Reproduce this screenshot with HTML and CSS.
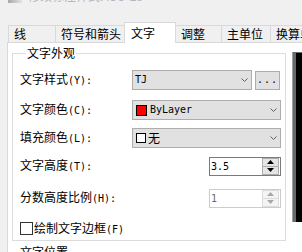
FILE: index.html
```html
<html>
<head>
  <title>修改标注样式</title>
  <link rel="stylesheet" href="styles.css">
</head>
<body>
  <div class="dialog">
    <div class="titlebar">
      <span class="appicon"></span>
      <span class="title">修改标注样式: ISO-25</span>
    </div>

    <div class="tabs">
      <div class="tab w1">线</div>
      <div class="tab w2">符号和箭头</div>
      <div class="tab w3 active">文字</div>
      <div class="tab w4">调整</div>
      <div class="tab w5">主单位</div>
      <div class="tab w6">换算单位</div>
    </div>

    <div class="panel">
      <div class="left">
        <fieldset class="group">
          <legend>文字外观</legend>

          <div class="row r1">
            <span class="lbl">文字样式<span class="hk">(Y):</span></span>
            <div class="combo short">
              <span class="mono">TJ</span>
              <svg class="chev" width="7" height="4" viewBox="0 0 7 4"><polyline points="0.5,0.5 3.5,3.5 6.5,0.5" fill="none" stroke="#606060" stroke-width="1"/></svg>
            </div>
            <div class="btn dots">...</div>
          </div>

          <div class="row r2">
            <span class="lbl">文字颜色<span class="hk">(C):</span></span>
            <div class="combo">
              <span class="swatch red"></span>
              <span class="mono">ByLayer</span>
              <svg class="chev" width="7" height="4" viewBox="0 0 7 4"><polyline points="0.5,0.5 3.5,3.5 6.5,0.5" fill="none" stroke="#606060" stroke-width="1"/></svg>
            </div>
          </div>

          <div class="row r3">
            <span class="lbl">填充颜色<span class="hk">(L):</span></span>
            <div class="combo">
              <span class="swatch none"></span>
              <span>无</span>
              <svg class="chev" width="7" height="4" viewBox="0 0 7 4"><polyline points="0.5,0.5 3.5,3.5 6.5,0.5" fill="none" stroke="#606060" stroke-width="1"/></svg>
            </div>
          </div>

          <div class="row r4">
            <span class="lbl">文字高度<span class="hk">(T):</span></span>
            <div class="spin">
              <span class="val mono">3.5</span>
              <div class="arrows">
                <div class="up"><svg width="7" height="4" viewBox="0 0 7 4"><polygon points="0,4 3.5,0 7,4" fill="#000"/></svg></div>
                <div class="dn"><svg width="7" height="4" viewBox="0 0 7 4"><polygon points="0,0 3.5,4 7,0" fill="#000"/></svg></div>
              </div>
            </div>
          </div>

          <div class="row r5">
            <span class="lbl">分数高度比例<span class="hk">(H):</span></span>
            <div class="spin disabled">
              <span class="val mono">1</span>
              <div class="arrows">
                <div class="up"><svg width="7" height="4" viewBox="0 0 7 4"><polygon points="0,4 3.5,0 7,4" fill="#a8a8a8"/></svg></div>
                <div class="dn"><svg width="7" height="4" viewBox="0 0 7 4"><polygon points="0,0 3.5,4 7,0" fill="#a8a8a8"/></svg></div>
              </div>
            </div>
          </div>

          <div class="row r6">
            <span class="check"></span>
            <span class="checklbl">绘制文字边框<span class="hk">(F)</span></span>
          </div>
        </fieldset>

        <div class="nextgroup">文字位置</div>
      </div>

      <div class="preview"></div>
    </div>
  </div>
</body>
</html>
```

FILE: styles.css
```css
body {
  margin: 0;
  background-color: #f0f0f0;
  font-family: "Noto Sans CJK SC", sans-serif;
  font-size: 12px;
  line-height: 14px;
  color: #000;
  overflow: hidden;
}

.dialog {
  width: 420px;
  height: 252px;
  overflow: hidden;
}

/* title bar, only its lower edge shows */
.titlebar {
  height: 22px;
  display: flex;
  align-items: flex-start;
  padding-left: 8px;
  overflow: hidden;
}

.appicon {
  width: 14px;
  height: 14px;
  margin-top: -11px;
  background: linear-gradient(90deg, #a8a8a8, #e4e4e4);
}

.title {
  margin-top: -11px;
  margin-left: 6px;
  color: #b4b8c4;
}

/* tabs */
.tabs {
  position: relative;
  z-index: 1;
  height: 21px;
  margin-bottom: -1px;
  padding-left: 8px;
  display: flex;
  align-items: flex-start;
}

.tab {
  box-sizing: border-box;
  height: 17px;
  margin-top: 3px;
  margin-left: -1px;
  padding-left: 5px;
  border: 1px solid #d9d9d9;
  border-bottom: none;
  background-color: #f0f0f0;
  line-height: 16px;
  white-space: nowrap;
  overflow: hidden;
}

.tab.w1 { width: 48px; margin-left: 0; }
.tab.w2 { width: 70px; }
.tab.w3 { width: 52px; }
.tab.w4 { width: 47px; }
.tab.w5 { width: 50px; }
.tab.w6 { width: 62px; }

.tab.active {
  height: 21px;
  margin-top: 0;
  padding-left: 6px;
  background-color: #fff;
  line-height: 20px;
}

/* tab page */
.panel {
  margin-left: 7px;
  height: 220px;
  border: 1px solid #d9d9d9;
  background-color: #fff;
  padding-left: 4px;
  display: flex;
  align-items: flex-start;
}

.group {
  box-sizing: border-box;
  width: 274px;
  min-width: 0;
  margin: 3px 0 0 0;
  padding: 0 4px 5px 7px;
  border: 1px solid #dcdcdc;
}

.group legend {
  margin-left: 6px;
  padding: 0 1px;
  line-height: 14px;
}

.row {
  display: flex;
  align-items: center;
  height: 20px;
}

.r1 { margin-top: 10px; }
.r2 { margin-top: 10px; }
.r3 { margin-top: 8px; }
.r4 { margin-top: 8px; }
.r5 { margin-top: 12px; }
.r6 { margin-top: 14px; height: 13px; }

.lbl {
  width: 112px;
  flex-shrink: 0;
  white-space: nowrap;
}

.hk, .mono {
  font-family: "DejaVu Sans Mono", "Liberation Mono", monospace;
  font-size: 10px;
}

.combo {
  box-sizing: border-box;
  width: 149px;
  height: 20px;
  border: 1px solid #adadad;
  background-color: #e1e1e1;
  display: flex;
  align-items: center;
  padding-left: 2px;
  padding-right: 3px;
}

.combo.short {
  width: 120px;
}

.chev {
  margin-left: auto;
}

.swatch {
  box-sizing: border-box;
  width: 11px;
  height: 11px;
  margin-left: 1px;
  margin-right: 3px;
  border: 1px solid #000;
}

.swatch.red {
  background-color: #ff0000;
}

.swatch.none {
  width: 10px;
  height: 10px;
  margin-right: 2px;
  background-color: #fff;
}

.btn {
  box-sizing: border-box;
  height: 19px;
  border: 1px solid #adadad;
  background-color: #e1e1e1;
  text-align: center;
}

.dots {
  width: 25px;
  margin-left: 3px;
  font-family: "DejaVu Sans Mono", monospace;
  font-size: 10px;
  line-height: 15px;
  letter-spacing: 1px;
}

/* spinner */
.spin {
  box-sizing: border-box;
  width: 72px;
  height: 19px;
  margin-left: auto;
  border: 1px solid #7a7a7a;
  background-color: #fff;
  display: flex;
  align-items: stretch;
}

.spin .val {
  flex: 1;
  padding-left: 1px;
  line-height: 17px;
}

.arrows {
  width: 17px;
  margin-right: 1px;
  display: flex;
  flex-direction: column;
}

.arrows .up, .arrows .dn {
  box-sizing: border-box;
  border: 1px solid #adadad;
  background-color: #e5e5e5;
  display: flex;
  align-items: center;
  justify-content: center;
}

.arrows .up { height: 9px; }
.arrows .dn { height: 8px; border-top: none; }

.spin.disabled {
  border-color: #cccccc;
}

.spin.disabled .val {
  color: #6d6d6d;
}

.spin.disabled .up, .spin.disabled .dn {
  border-color: #dcdcdc;
  background-color: #f4f4f4;
}

/* checkbox */
.check {
  box-sizing: border-box;
  width: 13px;
  height: 13px;
  border: 1px solid #333;
  background-color: #fff;
}

.checklbl {
  margin-left: 1px;
}

.nextgroup {
  margin-top: 4px;
  padding-left: 8px;
}

/* preview */
.preview {
  flex-shrink: 0;
  width: 120px;
  height: 169px;
  margin-top: 9px;
  margin-left: 7px;
  border-left: 3px solid #696969;
  border-top: 1px solid #696969;
  box-shadow: -1px 0 0 #a0a0a0;
  background-color: #000;
}
```
